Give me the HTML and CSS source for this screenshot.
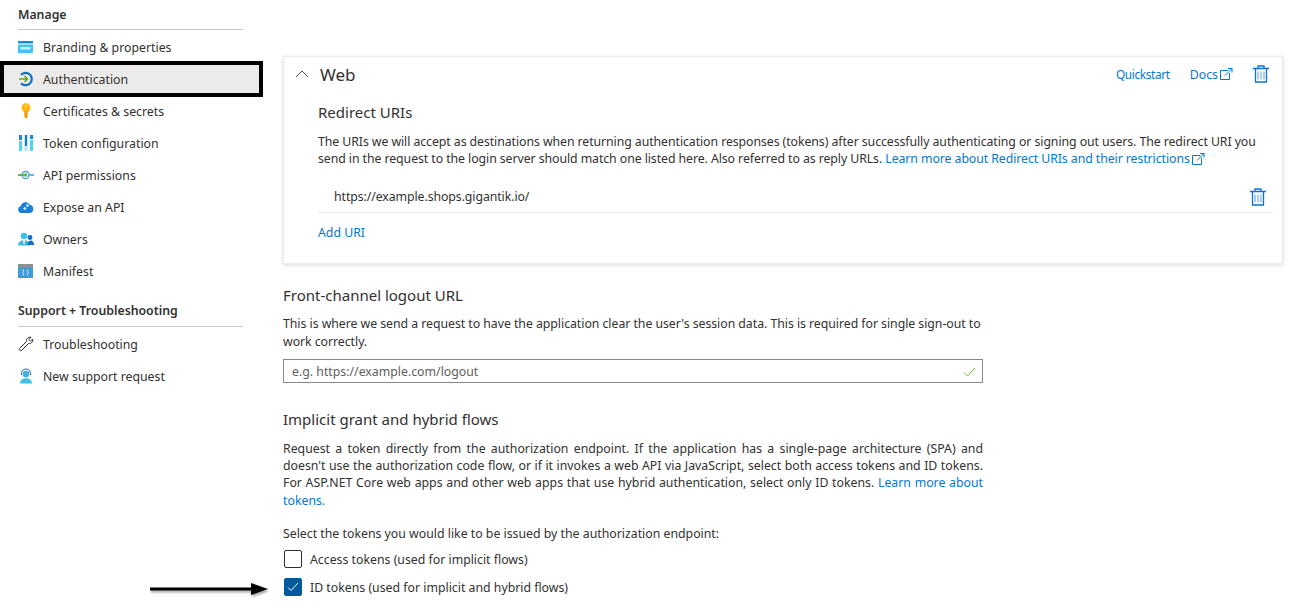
FILE: index.html
```html
<!DOCTYPE html>
<html lang="en">
<head>
    <meta charset="UTF-8">
    <title>Authentication</title>
    <link rel="stylesheet" href="styles.css">
</head>
<body>
    <aside class="sidebar">
        <div class="nav-heading nav-heading-first">Manage</div>
        <a class="nav-item">
            <svg class="nav-icon" viewBox="0 0 16 16"><rect x="0" y="2" width="15" height="12" rx=".5" fill="#45c3f0"/><rect x="0" y="2" width="15" height="2.500" fill="#1b87d6"/><rect x="0" y="4.500" width="15" height="1" fill="#fff"/><rect x="2.500" y="8" width="10" height="2.500" fill="#c3f1ff"/></svg>
            <span>Branding &amp; properties</span>
        </a>
        <a class="nav-item nav-item-active">
            <svg class="nav-icon" viewBox="0 0 16 16"><path d="M3 3.800A6.200 6.200 0 1 1 3 12.200" fill="none" stroke="#0f6fc6" stroke-width="2.200"/><path d="M1 8h8.500M6.500 5 9.500 8l-3 3" fill="none" stroke="#5ea61c" stroke-width="1.500"/></svg>
            <span>Authentication</span>
        </a>
        <a class="nav-item">
            <svg class="nav-icon" viewBox="0 0 16 16"><circle cx="8" cy="4.800" r="4.500" fill="#fdb913"/><circle cx="8" cy="2.800" r="1.100" fill="#ffe27a"/><path d="M6.300 8h3.400v6L8 15.800 6.300 14z" fill="#f59a0f"/></svg>
            <span>Certificates &amp; secrets</span>
        </a>
        <a class="nav-item">
            <svg class="nav-icon" viewBox="0 0 16 16"><path d="M1 0h3v5H1z" fill="#1b87d6"/><path d="M1 6h3v10H1z" fill="#50d4f5"/><path d="M6 0h4v16H6z" fill="#bfeefb"/><path d="M7 0h2v11H7z" fill="#1b77d0"/><path d="M12 0h3v4h-3z" fill="#1b87d6"/><path d="M12 5h3v11h-3z" fill="#50d4f5"/></svg>
            <span>Token configuration</span>
        </a>
        <a class="nav-item">
            <svg class="nav-icon" viewBox="0 0 16 16"><path d="M0 8h8" stroke="#6bb42c" stroke-width="2"/><path d="M11 8h5" stroke="#3e9fd8" stroke-width="1.500"/><circle cx="7.500" cy="8" r="3.500" fill="none" stroke="#3ea8d8" stroke-width="1.300"/><circle cx="7.500" cy="8" r="1.800" fill="#6bb42c"/></svg>
            <span>API permissions</span>
        </a>
        <a class="nav-item">
            <svg class="nav-icon" viewBox="0 0 16 16"><path d="M3.500 14A3.500 3.500 0 0 1 2.800 7.100 5 5 0 0 1 12 5.800 4.200 4.200 0 0 1 12 14z" fill="#1b7fd6"/><path d="M5 9.500l1.800-1.800 1.800 1.800-1.800 1.800zM7.800 6.500l1.700-1.700 1.700 1.700-1.700 1.700z" fill="#cdeafb"/></svg>
            <span>Expose an API</span>
        </a>
        <a class="nav-item">
            <svg class="nav-icon" viewBox="0 0 16 16"><circle cx="6" cy="5" r="3.300" fill="#3fc0e8"/><path d="M0 14.500c0-7 12-7 12 0z" fill="#3fb5e0"/><path d="M5.300 9h1.400l.4 3-1 1-1-1z" fill="#fff"/><circle cx="12" cy="6.500" r="2.400" fill="#0f6fc6"/><path d="M9.500 14c0-6 6.500-6 6.500 0z" fill="#0f6fc6"/></svg>
            <span>Owners</span>
        </a>
        <a class="nav-item">
            <svg class="nav-icon" viewBox="0 0 16 16"><rect x="0" y="1" width="15" height="14" fill="#3b9fd6"/><rect x="0" y="1" width="15" height="3.500" fill="#8f8f8f"/><path d="M6 6.500c-1.200 0 0 2.700-1.200 3 1.200.3 0 3 1.200 3M9 6.500c1.200 0 0 2.700 1.200 3-1.200.3 0 3-1.200 3" fill="none" stroke="#fff" stroke-width=".8"/></svg>
            <span>Manifest</span>
        </a>
        <div class="nav-heading">Support + Troubleshooting</div>
        <a class="nav-item">
            <svg class="nav-icon" viewBox="0 0 16 16"><path d="M1.500 12.500 8.500 5.500C8 3 10 .7 13 1.300L10.800 3.500l1.700 1.700L14.700 3c.6 3-1.700 5-4.200 4.500l-7 7c-1 1-3 -1-2-2z" fill="none" stroke="#333" stroke-width="1"/></svg>
            <span>Troubleshooting</span>
        </a>
        <a class="nav-item">
            <svg class="nav-icon" viewBox="0 0 16 16"><path d="M3.500 7V5.500a4.500 4.500 0 0 1 9 0V7" fill="none" stroke="#0f5fa8" stroke-width="1"/><circle cx="8" cy="6" r="3.300" fill="#3fb0e0"/><path d="M2 15.500c0-7 12-7 12 0z" fill="#3fc0e8"/></svg>
            <span>New support request</span>
        </a>
    </aside>

    <main class="content">
        <section class="card">
            <div class="card-head">
                <svg class="chevron" viewBox="0 0 14 8"><path d="M1 7 7 1l6 6" fill="none" stroke="#555" stroke-width="1"/></svg>
                <h2 class="card-title">Web</h2>
                <a class="link head-link quickstart">Quickstart</a>
                <a class="link head-link docs-link">Docs<svg class="ext" viewBox="0 0 14 14"><path d="M9 3.500H1.500v9h9V6M6 8.500 13 1.500M9 1.500h4v4" fill="none" stroke="#0078d4" stroke-width="1"/></svg></a>
                <svg class="trash" viewBox="0 0 16 18"><path d="M5 6.500v8M8 6.500v8M11 6.500v8" fill="none" stroke="#8fbff0" stroke-width="1.500"/><path d="M0 3.500h16M5 3.500V1h6v2.500M2.500 3.500v13.500h11V3.500" fill="none" stroke="#0f6fd8" stroke-width="1.300"/></svg>
            </div>
            <div class="card-body">
                <h3 class="sub-title">Redirect URIs</h3>
                <p class="text uri-text">The URIs we will accept as destinations when returning authentication responses (tokens) after successfully authenticating or signing out users. The redirect URI you send in the request to the login server should match one listed here. Also referred to as reply URLs. <a class="link">Learn more about Redirect URIs and their restrictions<svg class="ext" viewBox="0 0 14 14"><path d="M9 3.500H1.500v9h9V6M6 8.500 13 1.500M9 1.500h4v4" fill="none" stroke="#0078d4" stroke-width="1"/></svg></a></p>
                <div class="uri-row">
                    <span>https://example.shops.gigantik.io/</span>
                    <svg class="trash" viewBox="0 0 16 18"><path d="M5 6.500v8M8 6.500v8M11 6.500v8" fill="none" stroke="#8fbff0" stroke-width="1.500"/><path d="M0 3.500h16M5 3.500V1h6v2.500M2.500 3.500v13.500h11V3.500" fill="none" stroke="#0f6fd8" stroke-width="1.300"/></svg>
                </div>
                <a class="link add-uri">Add URI</a>
            </div>
        </section>

        <h2 class="section-title logout-title">Front-channel logout URL</h2>
        <p class="text narrow logout-text">This is where we send a request to have the application clear the user's session data. This is required for single sign-out to work correctly.</p>
        <div class="text-field">
            <span>e.g. https://example.com/logout</span>
            <svg class="field-check" viewBox="0 0 13 10"><path d="M1 5.500 4.500 9 12 1" fill="none" stroke="#6bb42c" stroke-width="1"/></svg>
        </div>

        <h2 class="section-title flows-title">Implicit grant and hybrid flows</h2>
        <p class="text narrow justified">Request a token directly from the authorization endpoint. If the application has a single-page architecture (SPA) and doesn't use the authorization code flow, or if it invokes a web API via JavaScript, select both access tokens and ID tokens. For ASP.NET Core web apps and other web apps that use hybrid authentication, select only ID tokens. <a class="link">Learn more about tokens.</a></p>
        <p class="text select-label">Select the tokens you would like to be issued by the authorization endpoint:</p>
        <div class="check-row">
            <span class="checkbox"></span>
            <span>Access tokens (used for implicit flows)</span>
        </div>
        <div class="check-row">
            <span class="checkbox checkbox-on"><svg viewBox="0 0 12 10"><path d="M1 5.500 4 8.500 11 1" fill="none" stroke="#fff" stroke-width="1"/></svg></span>
            <span>ID tokens (used for implicit and hybrid flows)</span>
        </div>
    </main>

    <svg class="arrow" viewBox="0 0 124 20"><path d="M0 7h104" stroke="#000" stroke-width="2.800"/><path d="M101 1l17 6-17 6z" fill="#000"/></svg>
</body>
</html>
```

FILE: styles.css
```css
html, body {
    margin: 0;
    height: 612px;
    overflow: hidden;
}
body {
    position: relative;
    display: flex;
    font-family: 'Noto Sans', 'Open Sans', sans-serif;
    font-size: 12.3px;
    color: #323130;
    background-color: #fff;
}
a {
    text-decoration: none;
}
.sidebar {
    width: 263px;
    flex-shrink: 0;
    padding-top: 5px;
}
.nav-heading {
    margin: 14px 20px 1px 18px;
    padding-bottom: 6px;
    height: 19px;
    line-height: 19px;
    font-weight: 600;
    border-bottom: 1px solid #c8c6c4;
}
.nav-heading-first {
    margin-top: 0;
    padding-bottom: 5px;
}
.nav-item {
    display: flex;
    align-items: center;
    gap: 9px;
    height: 32px;
    padding-left: 18px;
    box-sizing: border-box;
}
.nav-item-active {
    height: 36px;
    margin: -2px 0;
    padding-left: 14px;
    border: 4px solid #000;
    background-color: #edebe9;
    position: relative;
}
.nav-icon {
    width: 16px;
    height: 16px;
    flex-shrink: 0;
}
.content {
    margin-left: 20px;
    padding-top: 56px;
    width: 1000px;
}
.card {
    box-sizing: border-box;
    height: 208px;
    border: 1px solid #edebe9;
    box-shadow: 0 1px 4px rgba(0,0,0,0.14);
}
.card-head {
    display: flex;
    align-items: center;
    height: 34px;
    padding: 0 13px 0 11px;
}
.chevron {
    width: 14px;
    height: 8px;
    margin-right: 11px;
}
.card-title {
    flex: 1;
    margin: 0;
    font-size: 17px;
    font-weight: 400;
}
.link {
    color: #0078d4;
}
.head-link {
    margin-right: 20px;
}
.quickstart {
    font-size: 11.8px;
    letter-spacing: -0.33px;
}
.docs-link {
    display: flex;
    align-items: center;
}
.ext {
    width: 14px;
    height: 14px;
    margin-left: 1px;
    vertical-align: -3px;
}
.trash {
    width: 16px;
    height: 18px;
}
.card-body {
    padding: 11px 9px 0 34px;
}
.sub-title {
    margin: 0;
    font-size: 15px;
    font-weight: 400;
    line-height: 20px;
}
.text {
    margin: 0;
    line-height: 17.2px;
}
.uri-text {
    margin-top: 11px;
    line-height: 17.4px;
    letter-spacing: -0.07px;
}
.uri-row {
    box-sizing: border-box;
    display: flex;
    align-items: center;
    justify-content: space-between;
    height: 36px;
    margin-top: 9px;
    padding: 5px 7px 0 16px;
    border-bottom: 1px solid #edebe9;
    letter-spacing: -0.08px;
}
.add-uri {
    display: block;
    margin-top: 11px;
}
.section-title {
    margin: 0;
    font-size: 15px;
    font-weight: 400;
    line-height: 20px;
}
.logout-title {
    margin-top: 21px;
}
.narrow {
    width: 700px;
    margin-top: 10px;
}
.logout-text {
    line-height: 18px;
    letter-spacing: -0.04px;
}
.justified {
    margin-top: 11px;
    text-align: justify;
}
.text-field {
    box-sizing: border-box;
    display: flex;
    align-items: center;
    justify-content: space-between;
    width: 700px;
    height: 24px;
    margin-top: 8px;
    padding: 1px 6px 0 8px;
    border: 1px solid #8a8886;
    color: #605e5c;
}
.field-check {
    width: 13px;
    height: 10px;
}
.flows-title {
    margin-top: 26px;
}
.select-label {
    margin-top: 16px;
}
.check-row {
    display: flex;
    align-items: center;
    gap: 8px;
    height: 28px;
}
.select-label + .check-row {
    margin-top: 3px;
}
.checkbox {
    box-sizing: border-box;
    display: flex;
    align-items: center;
    justify-content: center;
    width: 18px;
    height: 18px;
    margin-left: 1px;
    border: 1px solid #323130;
    border-radius: 2px;
}
.checkbox-on {
    background-color: #005a9e;
    border-color: #005a9e;
}
.checkbox-on svg {
    width: 12px;
    height: 10px;
}
.arrow {
    position: absolute;
    left: 150px;
    top: 582px;
    width: 124px;
    height: 20px;
    filter: drop-shadow(1px 2px 1px rgba(0,0,0,0.35));
}
```
